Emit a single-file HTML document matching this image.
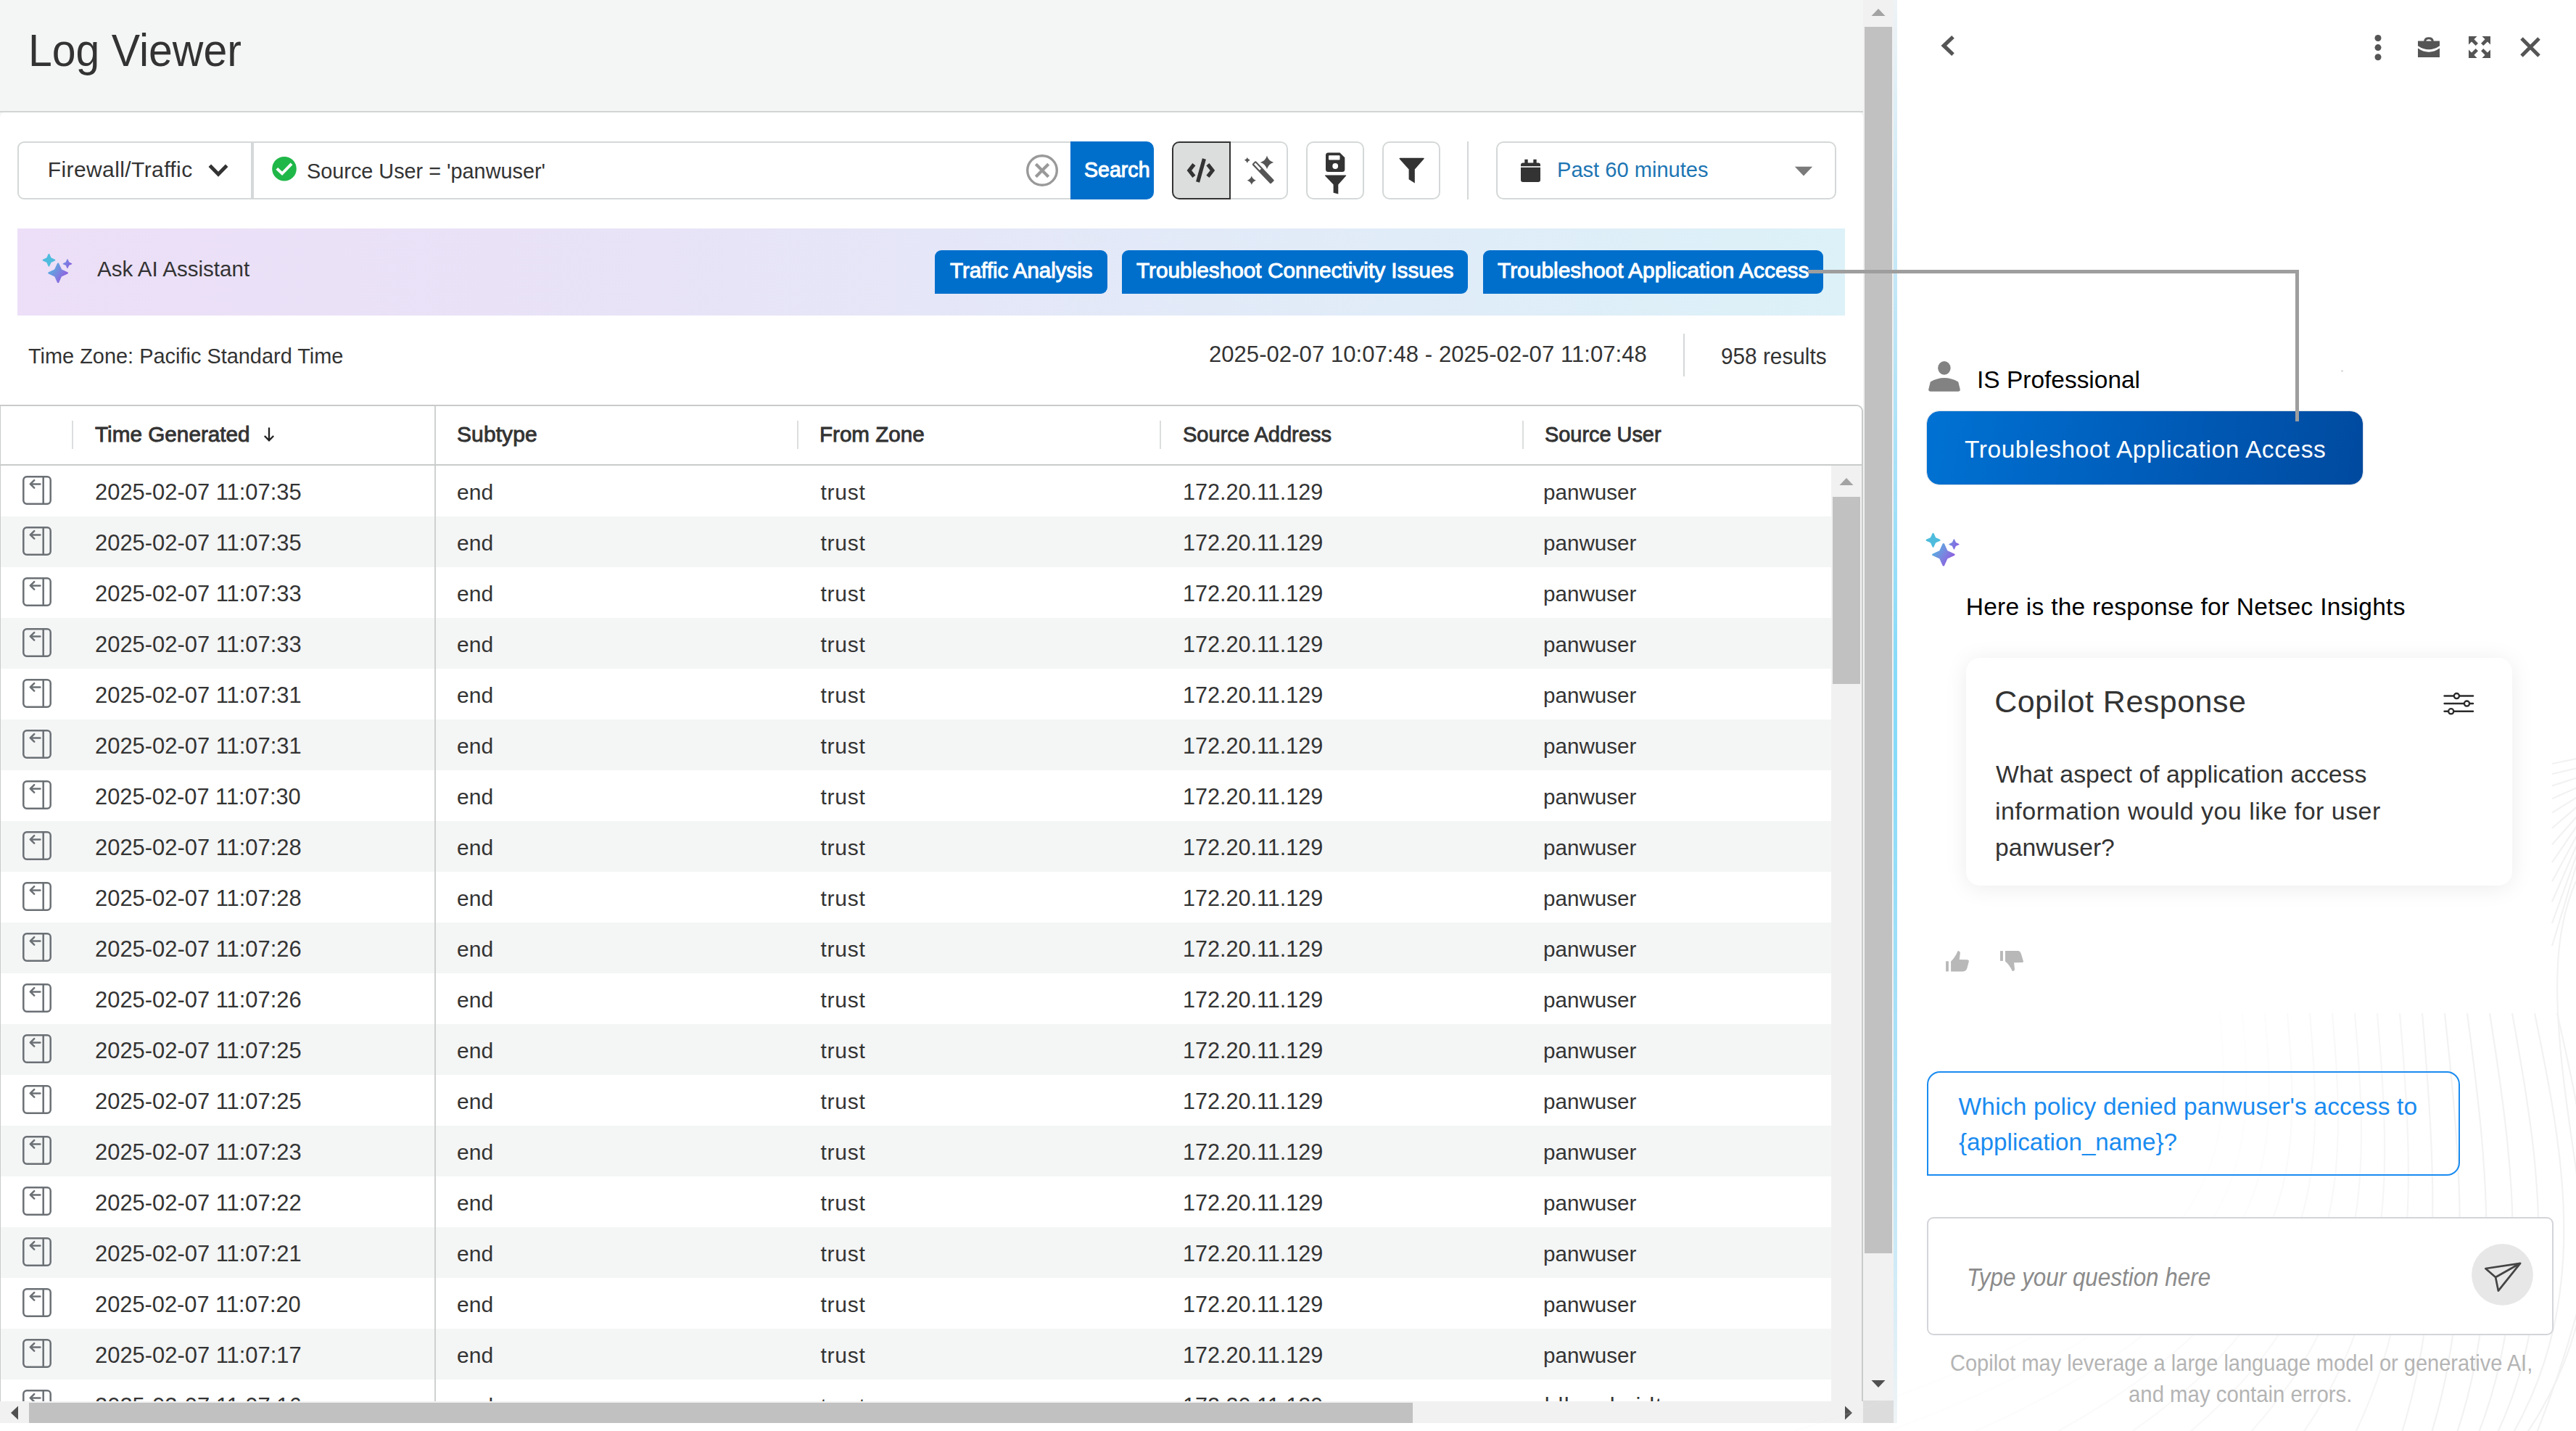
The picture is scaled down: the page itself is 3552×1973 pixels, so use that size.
<!DOCTYPE html>
<html><head><meta charset="utf-8"><title>Log Viewer</title>
<style>
html,body{margin:0;padding:0;}
body{width:3552px;height:1973px;position:relative;overflow:hidden;background:#fff;font-family:"Liberation Sans", sans-serif;}
body>div,body>span,body>svg{position:absolute;box-sizing:border-box;}
body>span{white-space:nowrap;line-height:1;display:block;transform-origin:0 0;}
svg{overflow:visible;}
</style></head><body>
<div style="left:0px;top:0px;width:2569px;height:166px;background:#f4f5f5;"></div>
<div style="left:0px;top:153px;width:2569px;height:2px;background:#d3d5d5;"></div>
<div style="left:0px;top:155px;width:2569px;height:1818px;background:#fff;border-radius:7px 7px 0 0;"></div>
<span style="left:39.08px;top:38.09px;font-size:62.5px;color:#333;transform:scaleX(0.9432);">Log Viewer</span>
<div style="left:24px;top:195px;width:324px;height:80px;border:2px solid #d5d8d8;border-radius:9px 0 0 9px;background:#fff;"></div>
<div style="left:348px;top:195px;width:1129px;height:80px;border:2px solid #d5d8d8;border-right:none;background:#fff;"></div>
<span style="left:65.70px;top:218.70px;font-size:30px;color:#333;letter-spacing:0.407px;">Firewall/Traffic</span>
<svg style="left:286px;top:224px;" width="30" height="22" viewBox="0 0 30 22"><path d="M3.3 4.3 L15 16.2 L26.7 4.3" fill="none" stroke="#333" stroke-width="5" stroke-linecap="butt" stroke-linejoin="miter"/></svg>
<svg style="left:375px;top:216px;" width="34" height="34" viewBox="0 0 34 34"><circle cx="17" cy="16.7" r="16.8" fill="#1fb748"/><path d="M6.8 16.4 L14 23.3 L27 9.8" fill="none" stroke="#fff" stroke-width="4"/></svg>
<span style="left:422.94px;top:221.10px;font-size:30px;color:#333;transform:scaleX(0.9608);">Source User = 'panwuser'</span>
<svg style="left:1414px;top:212px;" width="46" height="46" viewBox="0 0 46 46"><circle cx="23" cy="23" r="20.3" fill="none" stroke="#999" stroke-width="3.4"/><path d="M14.3 14.3 L31.7 31.7 M31.7 14.3 L14.3 31.7" stroke="#999" stroke-width="4.2" fill="none"/></svg>
<div style="left:1476px;top:195px;width:115px;height:80px;background:#006fcc;border-radius:0 10px 10px 0;"></div>
<span style="left:1495.45px;top:219.10px;font-size:30px;color:#fff;transform:scaleX(0.9526);-webkit-text-stroke:1.1px #fff;">Search</span>
<div style="left:1696px;top:195px;width:80px;height:80px;border:2px solid #d5d8d8;border-left:none;border-radius:0 10px 10px 0;background:#fff;"></div>
<div style="left:1616px;top:195px;width:81px;height:80px;border:2px solid #333;border-radius:10px 0 0 10px;background:#dcdddd;"></div>
<svg style="left:0;top:0" width="3552" height="1973" viewBox="0 0 3552 1973"><path d="M1646.4 226.6 L1639.9 235 L1646.4 243.4 M1665.4 226.6 L1671.9 235 L1665.4 243.4 M1660.4 219 L1651.6 251" fill="none" stroke="#333" stroke-width="5.2" stroke-linejoin="miter"/></svg>
<svg style="left:0;top:0" width="3552" height="1973" viewBox="0 0 3552 1973"><g transform="translate(1729.6 225) rotate(46.3)"><rect x="-1.2" y="-3.6" width="37.4" height="7.2" rx="1.4" fill="#555"/><rect x="0.8" y="-1.5" width="11.2" height="3" fill="#fff"/></g><path d="M1747 214.70000000000002 Q1749.1252 221.7748 1756.2 223.9 Q1749.1252 226.0252 1747 233.1 Q1744.8748 226.0252 1737.8 223.9 Q1744.8748 221.7748 1747 214.70000000000002 Z" fill="#555"/><path d="M1719.8 216.9 Q1720.7009 219.8991 1723.7 220.8 Q1720.7009 221.70090000000002 1719.8 224.70000000000002 Q1718.8990999999999 221.70090000000002 1715.8999999999999 220.8 Q1718.8990999999999 219.8991 1719.8 216.9 Z" fill="#555"/><path d="M1725.8 242.6 Q1727.2091 247.2909 1731.8999999999999 248.7 Q1727.2091 250.10909999999998 1725.8 254.79999999999998 Q1724.3908999999999 250.10909999999998 1719.7 248.7 Q1724.3908999999999 247.2909 1725.8 242.6 Z" fill="#555"/></svg>
<div style="left:1801px;top:195px;width:80px;height:80px;border:2px solid #d5d8d8;border-radius:10px;background:#fff;"></div>
<svg style="left:1826px;top:209px;" width="32" height="62" viewBox="0 0 32 62"><path d="M2 5 Q2 1.5 5.5 1.5 L21.5 1.5 L28.3 8.3 L28.3 24.5 Q28.3 28 24.8 28 L5.5 28 Q2 28 2 24.5 Z" fill="#333"/><rect x="6" y="5.2" width="15.5" height="6.3" rx="1" fill="#fff"/><circle cx="15.2" cy="20" r="3.9" fill="#fff"/><path d="M1.2 32.6 L29.8 32.6 Q30.6 32.6 30 33.4 L19.3 45.5 L19.3 58.6 L12.6 56.8 L12.6 45.5 L1.2 33.4 Q0.5 32.6 1.2 32.6 Z" fill="#333"/></svg>
<div style="left:1906px;top:195px;width:80px;height:80px;border:2px solid #d5d8d8;border-radius:10px;background:#fff;"></div>
<svg style="left:1928px;top:216px;" width="38" height="38" viewBox="0 0 38 38"><path d="M2.5 1.8 L34.8 1.8 Q36.6 1.8 35.4 3.3 L22.8 17.6 L22.8 36.4 L14.6 31.2 L14.6 17.6 L1.8 3.3 Q0.7 1.8 2.5 1.8 Z" fill="#333"/></svg>
<div style="left:2023px;top:195px;width:2px;height:80px;background:#d5d8d8;"></div>
<div style="left:2063px;top:195px;width:469px;height:80px;border:2px solid #d5d8d8;border-radius:10px;background:#fff;"></div>
<svg style="left:2096px;top:219px;" width="30" height="34" viewBox="0 0 30 34"><path d="M1 8.5 Q1 5.5 4 5.5 L25 5.5 Q28 5.5 28 8.5 L28 29 Q28 32 25 32 L4 32 Q1 32 1 29 Z" fill="#333"/><rect x="6.3" y="0.8" width="4.4" height="8" fill="#333"/><rect x="18.3" y="0.8" width="4.4" height="8" fill="#333"/><rect x="1" y="10.2" width="27" height="1.6" fill="#fff"/></svg>
<span style="left:2146.66px;top:219.20px;font-size:30px;color:#1d75b3;transform:scaleX(0.9696);">Past 60 minutes</span>
<svg style="left:2474px;top:229px;" width="26" height="14" viewBox="0 0 26 14"><path d="M0.8 0.8 L25.2 0.8 L13 13.4 Z" fill="#7a7a7a"/></svg>
<div style="left:24px;top:315px;width:2520px;height:120px;background:linear-gradient(90deg,#ecdff7 0%,#e8e3f7 35%,#e1ebf8 70%,#dcf1f8 100%);"></div>
<svg style="left:58.8px;top:349.8px;" width="40" height="40" viewBox="0 0 45.2 45.2"><defs><linearGradient id="g1" gradientUnits="userSpaceOnUse" x1="10" y1="22" x2="37" y2="40"><stop offset="0" stop-color="#55b0e0"/><stop offset="0.5" stop-color="#7a86df"/><stop offset="1" stop-color="#9355e2"/></linearGradient><linearGradient id="g1b" gradientUnits="userSpaceOnUse" x1="31" y1="12" x2="46" y2="19"><stop offset="0" stop-color="#7291e0"/><stop offset="1" stop-color="#8a5ce2"/></linearGradient></defs><path d="M9.54 0.77 L12.38 6.93 L18.54 9.77 L12.38 12.61 L9.54 18.77 L6.70 12.61 L0.54 9.77 L6.70 6.93 Z" fill="#4fbcdd" stroke="#4fbcdd" stroke-width="2.0" stroke-linejoin="round"/><path d="M38.40 8.85 L40.48 13.37 L45.00 15.45 L40.48 17.53 L38.40 22.05 L36.32 17.53 L31.80 15.45 L36.32 13.37 Z" fill="url(#g1b)" stroke="url(#g1b)" stroke-width="1.2" stroke-linejoin="round"/><path d="M23.85 15.46 L28.35 25.26 L38.15 29.76 L28.35 34.26 L23.85 44.06 L19.35 34.26 L9.55 29.76 L19.35 25.26 Z" fill="url(#g1)" stroke="url(#g1)" stroke-width="2.8" stroke-linejoin="round"/></svg>
<span style="left:134.00px;top:356.41px;font-size:30px;color:#333;transform:scaleX(0.9845);">Ask AI Assistant</span>
<div style="left:1289px;top:345px;width:237.6px;height:59.5px;background:#006fcc;border-radius:9px 9px 9px 0;"></div>
<span style="left:1309.80px;top:358.00px;font-size:30px;color:#fff;transform:scaleX(0.9825);-webkit-text-stroke:1.0px #fff;">Traffic Analysis</span>
<div style="left:1546.7px;top:345px;width:477.8px;height:59.5px;background:#006fcc;border-radius:9px 9px 9px 0;"></div>
<span style="left:1567.40px;top:358.00px;font-size:30px;color:#fff;transform:scaleX(0.9922);-webkit-text-stroke:1.0px #fff;">Troubleshoot Connectivity Issues</span>
<div style="left:2045px;top:345px;width:468.6px;height:59.5px;background:#006fcc;border-radius:9px 9px 9px 0;"></div>
<span style="left:2065.00px;top:358.00px;font-size:30px;color:#fff;transform:scaleX(0.9969);-webkit-text-stroke:1.0px #fff;">Troubleshoot Application Access</span>
<span style="left:39.40px;top:476.00px;font-size:30px;color:#333;transform:scaleX(0.9638);">Time Zone: Pacific Standard Time</span>
<span style="left:1666.90px;top:472.76px;font-size:31px;color:#333;letter-spacing:0.074px;">2025-02-07 10:07:48 - 2025-02-07 11:07:48</span>
<div style="left:2321px;top:460px;width:2px;height:59px;background:#d5d8d8;"></div>
<span style="left:2373.42px;top:476.18px;font-size:30.5px;color:#333;transform:scaleX(0.9759);">958 results</span>
<div style="left:0px;top:558px;width:2569px;height:1375px;border:2px solid #c9cbcb;border-bottom:none;border-left-width:1px;border-radius:0 9px 0 0;background:#fff;"></div>
<div style="left:1px;top:641px;width:2566px;height:1291px;overflow:hidden;">
<svg style="position:absolute;left:30px;top:15.2px" width="40" height="40" viewBox="0 0 40 40"><rect x="1.3" y="1.3" width="37.4" height="37.4" rx="4.6" fill="none" stroke="#6b7075" stroke-width="2.5"/><path d="M28.7 1.5 V38.5 M24.4 11.4 H11.2 M16.2 6.1 L10.8 11.4 L16.2 16.7" fill="none" stroke="#6b7075" stroke-width="2.5" stroke-linecap="round" stroke-linejoin="round"/></svg>
<div style="position:absolute;left:0;top:70.6px;width:2524px;height:70.0px;background:#f4f5f5;"></div>
<svg style="position:absolute;left:30px;top:85.2px" width="40" height="40" viewBox="0 0 40 40"><rect x="1.3" y="1.3" width="37.4" height="37.4" rx="4.6" fill="none" stroke="#6b7075" stroke-width="2.5"/><path d="M28.7 1.5 V38.5 M24.4 11.4 H11.2 M16.2 6.1 L10.8 11.4 L16.2 16.7" fill="none" stroke="#6b7075" stroke-width="2.5" stroke-linecap="round" stroke-linejoin="round"/></svg>
<svg style="position:absolute;left:30px;top:155.2px" width="40" height="40" viewBox="0 0 40 40"><rect x="1.3" y="1.3" width="37.4" height="37.4" rx="4.6" fill="none" stroke="#6b7075" stroke-width="2.5"/><path d="M28.7 1.5 V38.5 M24.4 11.4 H11.2 M16.2 6.1 L10.8 11.4 L16.2 16.7" fill="none" stroke="#6b7075" stroke-width="2.5" stroke-linecap="round" stroke-linejoin="round"/></svg>
<div style="position:absolute;left:0;top:210.6px;width:2524px;height:70.0px;background:#f4f5f5;"></div>
<svg style="position:absolute;left:30px;top:225.2px" width="40" height="40" viewBox="0 0 40 40"><rect x="1.3" y="1.3" width="37.4" height="37.4" rx="4.6" fill="none" stroke="#6b7075" stroke-width="2.5"/><path d="M28.7 1.5 V38.5 M24.4 11.4 H11.2 M16.2 6.1 L10.8 11.4 L16.2 16.7" fill="none" stroke="#6b7075" stroke-width="2.5" stroke-linecap="round" stroke-linejoin="round"/></svg>
<svg style="position:absolute;left:30px;top:295.2px" width="40" height="40" viewBox="0 0 40 40"><rect x="1.3" y="1.3" width="37.4" height="37.4" rx="4.6" fill="none" stroke="#6b7075" stroke-width="2.5"/><path d="M28.7 1.5 V38.5 M24.4 11.4 H11.2 M16.2 6.1 L10.8 11.4 L16.2 16.7" fill="none" stroke="#6b7075" stroke-width="2.5" stroke-linecap="round" stroke-linejoin="round"/></svg>
<div style="position:absolute;left:0;top:350.6px;width:2524px;height:70.0px;background:#f4f5f5;"></div>
<svg style="position:absolute;left:30px;top:365.2px" width="40" height="40" viewBox="0 0 40 40"><rect x="1.3" y="1.3" width="37.4" height="37.4" rx="4.6" fill="none" stroke="#6b7075" stroke-width="2.5"/><path d="M28.7 1.5 V38.5 M24.4 11.4 H11.2 M16.2 6.1 L10.8 11.4 L16.2 16.7" fill="none" stroke="#6b7075" stroke-width="2.5" stroke-linecap="round" stroke-linejoin="round"/></svg>
<svg style="position:absolute;left:30px;top:435.2px" width="40" height="40" viewBox="0 0 40 40"><rect x="1.3" y="1.3" width="37.4" height="37.4" rx="4.6" fill="none" stroke="#6b7075" stroke-width="2.5"/><path d="M28.7 1.5 V38.5 M24.4 11.4 H11.2 M16.2 6.1 L10.8 11.4 L16.2 16.7" fill="none" stroke="#6b7075" stroke-width="2.5" stroke-linecap="round" stroke-linejoin="round"/></svg>
<div style="position:absolute;left:0;top:490.6px;width:2524px;height:70.0px;background:#f4f5f5;"></div>
<svg style="position:absolute;left:30px;top:505.2px" width="40" height="40" viewBox="0 0 40 40"><rect x="1.3" y="1.3" width="37.4" height="37.4" rx="4.6" fill="none" stroke="#6b7075" stroke-width="2.5"/><path d="M28.7 1.5 V38.5 M24.4 11.4 H11.2 M16.2 6.1 L10.8 11.4 L16.2 16.7" fill="none" stroke="#6b7075" stroke-width="2.5" stroke-linecap="round" stroke-linejoin="round"/></svg>
<svg style="position:absolute;left:30px;top:575.2px" width="40" height="40" viewBox="0 0 40 40"><rect x="1.3" y="1.3" width="37.4" height="37.4" rx="4.6" fill="none" stroke="#6b7075" stroke-width="2.5"/><path d="M28.7 1.5 V38.5 M24.4 11.4 H11.2 M16.2 6.1 L10.8 11.4 L16.2 16.7" fill="none" stroke="#6b7075" stroke-width="2.5" stroke-linecap="round" stroke-linejoin="round"/></svg>
<div style="position:absolute;left:0;top:630.6px;width:2524px;height:70.0px;background:#f4f5f5;"></div>
<svg style="position:absolute;left:30px;top:645.2px" width="40" height="40" viewBox="0 0 40 40"><rect x="1.3" y="1.3" width="37.4" height="37.4" rx="4.6" fill="none" stroke="#6b7075" stroke-width="2.5"/><path d="M28.7 1.5 V38.5 M24.4 11.4 H11.2 M16.2 6.1 L10.8 11.4 L16.2 16.7" fill="none" stroke="#6b7075" stroke-width="2.5" stroke-linecap="round" stroke-linejoin="round"/></svg>
<svg style="position:absolute;left:30px;top:715.2px" width="40" height="40" viewBox="0 0 40 40"><rect x="1.3" y="1.3" width="37.4" height="37.4" rx="4.6" fill="none" stroke="#6b7075" stroke-width="2.5"/><path d="M28.7 1.5 V38.5 M24.4 11.4 H11.2 M16.2 6.1 L10.8 11.4 L16.2 16.7" fill="none" stroke="#6b7075" stroke-width="2.5" stroke-linecap="round" stroke-linejoin="round"/></svg>
<div style="position:absolute;left:0;top:770.6px;width:2524px;height:70.0px;background:#f4f5f5;"></div>
<svg style="position:absolute;left:30px;top:785.2px" width="40" height="40" viewBox="0 0 40 40"><rect x="1.3" y="1.3" width="37.4" height="37.4" rx="4.6" fill="none" stroke="#6b7075" stroke-width="2.5"/><path d="M28.7 1.5 V38.5 M24.4 11.4 H11.2 M16.2 6.1 L10.8 11.4 L16.2 16.7" fill="none" stroke="#6b7075" stroke-width="2.5" stroke-linecap="round" stroke-linejoin="round"/></svg>
<svg style="position:absolute;left:30px;top:855.2px" width="40" height="40" viewBox="0 0 40 40"><rect x="1.3" y="1.3" width="37.4" height="37.4" rx="4.6" fill="none" stroke="#6b7075" stroke-width="2.5"/><path d="M28.7 1.5 V38.5 M24.4 11.4 H11.2 M16.2 6.1 L10.8 11.4 L16.2 16.7" fill="none" stroke="#6b7075" stroke-width="2.5" stroke-linecap="round" stroke-linejoin="round"/></svg>
<div style="position:absolute;left:0;top:910.6px;width:2524px;height:70.0px;background:#f4f5f5;"></div>
<svg style="position:absolute;left:30px;top:925.2px" width="40" height="40" viewBox="0 0 40 40"><rect x="1.3" y="1.3" width="37.4" height="37.4" rx="4.6" fill="none" stroke="#6b7075" stroke-width="2.5"/><path d="M28.7 1.5 V38.5 M24.4 11.4 H11.2 M16.2 6.1 L10.8 11.4 L16.2 16.7" fill="none" stroke="#6b7075" stroke-width="2.5" stroke-linecap="round" stroke-linejoin="round"/></svg>
<svg style="position:absolute;left:30px;top:995.2px" width="40" height="40" viewBox="0 0 40 40"><rect x="1.3" y="1.3" width="37.4" height="37.4" rx="4.6" fill="none" stroke="#6b7075" stroke-width="2.5"/><path d="M28.7 1.5 V38.5 M24.4 11.4 H11.2 M16.2 6.1 L10.8 11.4 L16.2 16.7" fill="none" stroke="#6b7075" stroke-width="2.5" stroke-linecap="round" stroke-linejoin="round"/></svg>
<div style="position:absolute;left:0;top:1050.6px;width:2524px;height:70.0px;background:#f4f5f5;"></div>
<svg style="position:absolute;left:30px;top:1065.2px" width="40" height="40" viewBox="0 0 40 40"><rect x="1.3" y="1.3" width="37.4" height="37.4" rx="4.6" fill="none" stroke="#6b7075" stroke-width="2.5"/><path d="M28.7 1.5 V38.5 M24.4 11.4 H11.2 M16.2 6.1 L10.8 11.4 L16.2 16.7" fill="none" stroke="#6b7075" stroke-width="2.5" stroke-linecap="round" stroke-linejoin="round"/></svg>
<svg style="position:absolute;left:30px;top:1135.2px" width="40" height="40" viewBox="0 0 40 40"><rect x="1.3" y="1.3" width="37.4" height="37.4" rx="4.6" fill="none" stroke="#6b7075" stroke-width="2.5"/><path d="M28.7 1.5 V38.5 M24.4 11.4 H11.2 M16.2 6.1 L10.8 11.4 L16.2 16.7" fill="none" stroke="#6b7075" stroke-width="2.5" stroke-linecap="round" stroke-linejoin="round"/></svg>
<div style="position:absolute;left:0;top:1190.6px;width:2524px;height:70.0px;background:#f4f5f5;"></div>
<svg style="position:absolute;left:30px;top:1205.2px" width="40" height="40" viewBox="0 0 40 40"><rect x="1.3" y="1.3" width="37.4" height="37.4" rx="4.6" fill="none" stroke="#6b7075" stroke-width="2.5"/><path d="M28.7 1.5 V38.5 M24.4 11.4 H11.2 M16.2 6.1 L10.8 11.4 L16.2 16.7" fill="none" stroke="#6b7075" stroke-width="2.5" stroke-linecap="round" stroke-linejoin="round"/></svg>
<svg style="position:absolute;left:30px;top:1275.2px" width="40" height="40" viewBox="0 0 40 40"><rect x="1.3" y="1.3" width="37.4" height="37.4" rx="4.6" fill="none" stroke="#6b7075" stroke-width="2.5"/><path d="M28.7 1.5 V38.5 M24.4 11.4 H11.2 M16.2 6.1 L10.8 11.4 L16.2 16.7" fill="none" stroke="#6b7075" stroke-width="2.5" stroke-linecap="round" stroke-linejoin="round"/></svg>
</div>
<span style="left:130.60px;top:662.76px;font-size:31px;color:#333;transform:scaleX(0.9970);">2025-02-07 11:07:35</span>
<span style="left:630.00px;top:663.61px;font-size:30px;color:#333;letter-spacing:0.061px;">end</span>
<span style="left:1131.50px;top:663.61px;font-size:30px;color:#333;letter-spacing:0.744px;">trust</span>
<span style="left:1630.83px;top:662.76px;font-size:31px;color:#333;transform:scaleX(0.9858);">172.20.11.129</span>
<span style="left:2128.01px;top:663.61px;font-size:30px;color:#333;transform:scaleX(0.9876);">panwuser</span>
<span style="left:130.60px;top:732.76px;font-size:31px;color:#333;transform:scaleX(0.9970);">2025-02-07 11:07:35</span>
<span style="left:630.00px;top:733.61px;font-size:30px;color:#333;letter-spacing:0.061px;">end</span>
<span style="left:1131.50px;top:733.61px;font-size:30px;color:#333;letter-spacing:0.744px;">trust</span>
<span style="left:1630.83px;top:732.76px;font-size:31px;color:#333;transform:scaleX(0.9858);">172.20.11.129</span>
<span style="left:2128.01px;top:733.61px;font-size:30px;color:#333;transform:scaleX(0.9876);">panwuser</span>
<span style="left:130.60px;top:802.76px;font-size:31px;color:#333;transform:scaleX(0.9970);">2025-02-07 11:07:33</span>
<span style="left:630.00px;top:803.61px;font-size:30px;color:#333;letter-spacing:0.061px;">end</span>
<span style="left:1131.50px;top:803.61px;font-size:30px;color:#333;letter-spacing:0.744px;">trust</span>
<span style="left:1630.83px;top:802.76px;font-size:31px;color:#333;transform:scaleX(0.9858);">172.20.11.129</span>
<span style="left:2128.01px;top:803.61px;font-size:30px;color:#333;transform:scaleX(0.9876);">panwuser</span>
<span style="left:130.60px;top:872.76px;font-size:31px;color:#333;transform:scaleX(0.9970);">2025-02-07 11:07:33</span>
<span style="left:630.00px;top:873.61px;font-size:30px;color:#333;letter-spacing:0.061px;">end</span>
<span style="left:1131.50px;top:873.61px;font-size:30px;color:#333;letter-spacing:0.744px;">trust</span>
<span style="left:1630.83px;top:872.76px;font-size:31px;color:#333;transform:scaleX(0.9858);">172.20.11.129</span>
<span style="left:2128.01px;top:873.61px;font-size:30px;color:#333;transform:scaleX(0.9876);">panwuser</span>
<span style="left:130.60px;top:942.76px;font-size:31px;color:#333;transform:scaleX(0.9970);">2025-02-07 11:07:31</span>
<span style="left:630.00px;top:943.61px;font-size:30px;color:#333;letter-spacing:0.061px;">end</span>
<span style="left:1131.50px;top:943.61px;font-size:30px;color:#333;letter-spacing:0.744px;">trust</span>
<span style="left:1630.83px;top:942.76px;font-size:31px;color:#333;transform:scaleX(0.9858);">172.20.11.129</span>
<span style="left:2128.01px;top:943.61px;font-size:30px;color:#333;transform:scaleX(0.9876);">panwuser</span>
<span style="left:130.60px;top:1012.76px;font-size:31px;color:#333;transform:scaleX(0.9970);">2025-02-07 11:07:31</span>
<span style="left:630.00px;top:1013.61px;font-size:30px;color:#333;letter-spacing:0.061px;">end</span>
<span style="left:1131.50px;top:1013.61px;font-size:30px;color:#333;letter-spacing:0.744px;">trust</span>
<span style="left:1630.83px;top:1012.76px;font-size:31px;color:#333;transform:scaleX(0.9858);">172.20.11.129</span>
<span style="left:2128.01px;top:1013.61px;font-size:30px;color:#333;transform:scaleX(0.9876);">panwuser</span>
<span style="left:130.61px;top:1082.76px;font-size:31px;color:#333;transform:scaleX(0.9935);">2025-02-07 11:07:30</span>
<span style="left:630.00px;top:1083.61px;font-size:30px;color:#333;letter-spacing:0.061px;">end</span>
<span style="left:1131.50px;top:1083.61px;font-size:30px;color:#333;letter-spacing:0.744px;">trust</span>
<span style="left:1630.83px;top:1082.76px;font-size:31px;color:#333;transform:scaleX(0.9858);">172.20.11.129</span>
<span style="left:2128.01px;top:1083.61px;font-size:30px;color:#333;transform:scaleX(0.9876);">panwuser</span>
<span style="left:130.60px;top:1152.76px;font-size:31px;color:#333;transform:scaleX(0.9970);">2025-02-07 11:07:28</span>
<span style="left:630.00px;top:1153.61px;font-size:30px;color:#333;letter-spacing:0.061px;">end</span>
<span style="left:1131.50px;top:1153.61px;font-size:30px;color:#333;letter-spacing:0.744px;">trust</span>
<span style="left:1630.83px;top:1152.76px;font-size:31px;color:#333;transform:scaleX(0.9858);">172.20.11.129</span>
<span style="left:2128.01px;top:1153.61px;font-size:30px;color:#333;transform:scaleX(0.9876);">panwuser</span>
<span style="left:130.60px;top:1222.76px;font-size:31px;color:#333;transform:scaleX(0.9970);">2025-02-07 11:07:28</span>
<span style="left:630.00px;top:1223.61px;font-size:30px;color:#333;letter-spacing:0.061px;">end</span>
<span style="left:1131.50px;top:1223.61px;font-size:30px;color:#333;letter-spacing:0.744px;">trust</span>
<span style="left:1630.83px;top:1222.76px;font-size:31px;color:#333;transform:scaleX(0.9858);">172.20.11.129</span>
<span style="left:2128.01px;top:1223.61px;font-size:30px;color:#333;transform:scaleX(0.9876);">panwuser</span>
<span style="left:130.60px;top:1292.76px;font-size:31px;color:#333;transform:scaleX(0.9970);">2025-02-07 11:07:26</span>
<span style="left:630.00px;top:1293.61px;font-size:30px;color:#333;letter-spacing:0.061px;">end</span>
<span style="left:1131.50px;top:1293.61px;font-size:30px;color:#333;letter-spacing:0.744px;">trust</span>
<span style="left:1630.83px;top:1292.76px;font-size:31px;color:#333;transform:scaleX(0.9858);">172.20.11.129</span>
<span style="left:2128.01px;top:1293.61px;font-size:30px;color:#333;transform:scaleX(0.9876);">panwuser</span>
<span style="left:130.60px;top:1362.76px;font-size:31px;color:#333;transform:scaleX(0.9970);">2025-02-07 11:07:26</span>
<span style="left:630.00px;top:1363.61px;font-size:30px;color:#333;letter-spacing:0.061px;">end</span>
<span style="left:1131.50px;top:1363.61px;font-size:30px;color:#333;letter-spacing:0.744px;">trust</span>
<span style="left:1630.83px;top:1362.76px;font-size:31px;color:#333;transform:scaleX(0.9858);">172.20.11.129</span>
<span style="left:2128.01px;top:1363.61px;font-size:30px;color:#333;transform:scaleX(0.9876);">panwuser</span>
<span style="left:130.60px;top:1432.76px;font-size:31px;color:#333;transform:scaleX(0.9970);">2025-02-07 11:07:25</span>
<span style="left:630.00px;top:1433.61px;font-size:30px;color:#333;letter-spacing:0.061px;">end</span>
<span style="left:1131.50px;top:1433.61px;font-size:30px;color:#333;letter-spacing:0.744px;">trust</span>
<span style="left:1630.83px;top:1432.76px;font-size:31px;color:#333;transform:scaleX(0.9858);">172.20.11.129</span>
<span style="left:2128.01px;top:1433.61px;font-size:30px;color:#333;transform:scaleX(0.9876);">panwuser</span>
<span style="left:130.60px;top:1502.76px;font-size:31px;color:#333;transform:scaleX(0.9970);">2025-02-07 11:07:25</span>
<span style="left:630.00px;top:1503.61px;font-size:30px;color:#333;letter-spacing:0.061px;">end</span>
<span style="left:1131.50px;top:1503.61px;font-size:30px;color:#333;letter-spacing:0.744px;">trust</span>
<span style="left:1630.83px;top:1502.76px;font-size:31px;color:#333;transform:scaleX(0.9858);">172.20.11.129</span>
<span style="left:2128.01px;top:1503.61px;font-size:30px;color:#333;transform:scaleX(0.9876);">panwuser</span>
<span style="left:130.60px;top:1572.76px;font-size:31px;color:#333;transform:scaleX(0.9970);">2025-02-07 11:07:23</span>
<span style="left:630.00px;top:1573.61px;font-size:30px;color:#333;letter-spacing:0.061px;">end</span>
<span style="left:1131.50px;top:1573.61px;font-size:30px;color:#333;letter-spacing:0.744px;">trust</span>
<span style="left:1630.83px;top:1572.76px;font-size:31px;color:#333;transform:scaleX(0.9858);">172.20.11.129</span>
<span style="left:2128.01px;top:1573.61px;font-size:30px;color:#333;transform:scaleX(0.9876);">panwuser</span>
<span style="left:130.60px;top:1642.76px;font-size:31px;color:#333;transform:scaleX(0.9970);">2025-02-07 11:07:22</span>
<span style="left:630.00px;top:1643.61px;font-size:30px;color:#333;letter-spacing:0.061px;">end</span>
<span style="left:1131.50px;top:1643.61px;font-size:30px;color:#333;letter-spacing:0.744px;">trust</span>
<span style="left:1630.83px;top:1642.76px;font-size:31px;color:#333;transform:scaleX(0.9858);">172.20.11.129</span>
<span style="left:2128.01px;top:1643.61px;font-size:30px;color:#333;transform:scaleX(0.9876);">panwuser</span>
<span style="left:130.60px;top:1712.76px;font-size:31px;color:#333;transform:scaleX(0.9970);">2025-02-07 11:07:21</span>
<span style="left:630.00px;top:1713.61px;font-size:30px;color:#333;letter-spacing:0.061px;">end</span>
<span style="left:1131.50px;top:1713.61px;font-size:30px;color:#333;letter-spacing:0.744px;">trust</span>
<span style="left:1630.83px;top:1712.76px;font-size:31px;color:#333;transform:scaleX(0.9858);">172.20.11.129</span>
<span style="left:2128.01px;top:1713.61px;font-size:30px;color:#333;transform:scaleX(0.9876);">panwuser</span>
<span style="left:130.61px;top:1782.76px;font-size:31px;color:#333;transform:scaleX(0.9935);">2025-02-07 11:07:20</span>
<span style="left:630.00px;top:1783.61px;font-size:30px;color:#333;letter-spacing:0.061px;">end</span>
<span style="left:1131.50px;top:1783.61px;font-size:30px;color:#333;letter-spacing:0.744px;">trust</span>
<span style="left:1630.83px;top:1782.76px;font-size:31px;color:#333;transform:scaleX(0.9858);">172.20.11.129</span>
<span style="left:2128.01px;top:1783.61px;font-size:30px;color:#333;transform:scaleX(0.9876);">panwuser</span>
<span style="left:130.60px;top:1852.76px;font-size:31px;color:#333;transform:scaleX(0.9970);">2025-02-07 11:07:17</span>
<span style="left:630.00px;top:1853.61px;font-size:30px;color:#333;letter-spacing:0.061px;">end</span>
<span style="left:1131.50px;top:1853.61px;font-size:30px;color:#333;letter-spacing:0.744px;">trust</span>
<span style="left:1630.83px;top:1852.76px;font-size:31px;color:#333;transform:scaleX(0.9858);">172.20.11.129</span>
<span style="left:2128.01px;top:1853.61px;font-size:30px;color:#333;transform:scaleX(0.9876);">panwuser</span>
<span style="left:130.60px;top:1922.76px;font-size:31px;color:#333;transform:scaleX(0.9970);">2025-02-07 11:07:16</span>
<span style="left:630.00px;top:1923.61px;font-size:30px;color:#333;letter-spacing:0.061px;">end</span>
<span style="left:1131.50px;top:1923.61px;font-size:30px;color:#333;letter-spacing:0.744px;">trust</span>
<span style="left:1630.83px;top:1922.76px;font-size:31px;color:#333;transform:scaleX(0.9858);">172.20.11.129</span>
<span style="left:2129.70px;top:1922.76px;font-size:31px;color:#333;letter-spacing:1.511px;">bllovekaidt</span>
<div style="left:599px;top:560px;width:2px;height:1372px;background:#cfd1d1;"></div>
<div style="left:1px;top:560px;width:2566px;height:80px;background:#fff;border-radius:0 8px 0 0;"></div>
<div style="left:599px;top:560px;width:2px;height:80px;background:#cfd1d1;"></div>
<div style="left:0px;top:639.7px;width:2569px;height:2px;background:#c9cbcb;"></div>
<div style="left:99px;top:580px;width:2px;height:39px;background:#dcdede;"></div>
<div style="left:1099px;top:580px;width:2px;height:39px;background:#dcdede;"></div>
<div style="left:1599px;top:580px;width:2px;height:39px;background:#dcdede;"></div>
<div style="left:2099px;top:580px;width:2px;height:39px;background:#dcdede;"></div>
<span style="left:131.25px;top:583.61px;font-size:30px;color:#333;transform:scaleX(0.9907);-webkit-text-stroke:0.9px #333;">Time Generated</span>
<svg style="left:363px;top:588px;" width="16" height="22" viewBox="0 0 16 22"><path d="M8 1.5 V19 M1.8 13 L8 19.4 L14.2 13" fill="none" stroke="#222" stroke-width="2.3"/></svg>
<span style="left:630.00px;top:583.61px;font-size:30px;color:#333;letter-spacing:0.098px;-webkit-text-stroke:0.9px #333;">Subtype</span>
<span style="left:1130.03px;top:583.61px;font-size:30px;color:#333;transform:scaleX(0.9859);-webkit-text-stroke:0.9px #333;">From Zone</span>
<span style="left:1630.83px;top:583.61px;font-size:30px;color:#333;transform:scaleX(0.9675);-webkit-text-stroke:0.9px #333;">Source Address</span>
<span style="left:2130.04px;top:583.61px;font-size:30px;color:#333;transform:scaleX(0.9628);-webkit-text-stroke:0.9px #333;">Source User</span>
<div style="left:2525px;top:641.6px;width:42px;height:1291px;background:#f1f1f1;"></div>
<div style="left:2527.2px;top:684.6px;width:37.7px;height:258.2px;background:#c1c1c1;"></div>
<svg style="left:2536px;top:658px;" width="20" height="12" viewBox="0 0 20 12"><path d="M0.5 11 L10 1 L19.5 11 Z" fill="#a3a3a3"/></svg>
<div style="left:0px;top:1932px;width:2569px;height:30px;background:#f1f1f1;"></div>
<div style="left:40px;top:1933.5px;width:1908px;height:28.5px;background:#c1c1c1;"></div>
<svg style="left:14px;top:1938px;" width="12" height="20" viewBox="0 0 12 20"><path d="M11 0.5 L1 10 L11 19.5 Z" fill="#505050"/></svg>
<svg style="left:2543px;top:1938px;" width="12" height="20" viewBox="0 0 12 20"><path d="M1 0.5 L11 10 L1 19.5 Z" fill="#505050"/></svg>
<div style="left:0px;top:1962px;width:2616px;height:11px;background:#fff;"></div>
<div style="left:2569px;top:0px;width:42px;height:1932px;background:#f1f1f1;"></div>
<div style="left:2571px;top:37px;width:37.5px;height:1691px;background:#c1c1c1;"></div>
<svg style="left:2580px;top:11px;" width="20" height="12" viewBox="0 0 20 12"><path d="M0.5 11 L10 1 L19.5 11 Z" fill="#a3a3a3"/></svg>
<svg style="left:2580px;top:1902px;" width="20" height="12" viewBox="0 0 20 12"><path d="M0.5 1 L10 11 L19.5 1 Z" fill="#505050"/></svg>
<div style="left:2569px;top:1931px;width:42px;height:31px;background:#dcdcdc;"></div>
<div style="left:2611px;top:0px;width:5.2px;height:1962px;background:linear-gradient(180deg,#eef3f6 0%,#c3e7f7 20%,#87dbf9 47%,#87dbf9 53%,#b5e3f7 80%,#f0f4f6 100%);"></div>
<div style="left:2616px;top:0px;width:936px;height:1973px;background:#fff;"></div>
<svg style="left:0;top:0" width="3552" height="1973" viewBox="0 0 3552 1973"><g fill="none" stroke="#f2f2f2" stroke-width="2.2" stroke-linejoin="round"><path d="M3061.0 1397.0 L3062.9 1421.1 L3064.5 1445.2 L3065.6 1469.2 L3065.9 1493.3 L3065.0 1517.4 L3062.8 1541.5 L3058.8 1565.6 L3053.0 1589.7 L3044.9 1613.8 L3034.3 1637.8 L3020.9 1661.9 L3004.5 1686.0 L2984.7 1710.1 L2961.4 1734.2 L2934.1 1758.2 L2902.7 1782.3 L2866.8 1806.4 L2826.2 1830.5 L2780.7 1854.6 L2729.8 1878.7 L2673.4 1902.8 L2611.1 1926.8 L2542.8 1950.9 L2468.0 1975.0" stroke-opacity="0.12"/><path d="M3092.0 1397.0 L3093.9 1421.1 L3095.6 1445.2 L3096.8 1469.2 L3097.3 1493.3 L3096.9 1517.4 L3095.3 1541.5 L3092.3 1565.6 L3087.7 1589.7 L3081.1 1613.8 L3072.5 1637.8 L3061.5 1661.9 L3048.0 1686.0 L3031.6 1710.1 L3012.2 1734.2 L2989.5 1758.2 L2963.3 1782.3 L2933.4 1806.4 L2899.4 1830.5 L2861.3 1854.6 L2818.7 1878.7 L2771.4 1902.8 L2719.1 1926.8 L2661.8 1950.9 L2599.0 1975.0" stroke-opacity="0.17"/><path d="M3123.0 1397.0 L3124.9 1421.1 L3126.7 1445.2 L3128.0 1469.2 L3128.8 1493.3 L3128.7 1517.4 L3127.7 1541.5 L3125.5 1565.6 L3122.0 1589.7 L3116.9 1613.8 L3110.0 1637.8 L3101.2 1661.9 L3090.2 1686.0 L3076.9 1710.1 L3061.1 1734.2 L3042.5 1758.2 L3021.0 1782.3 L2996.4 1806.4 L2968.4 1830.5 L2936.9 1854.6 L2901.8 1878.7 L2862.7 1902.8 L2819.5 1926.8 L2772.0 1950.9 L2720.0 1975.0" stroke-opacity="0.26"/><path d="M3154.0 1397.0 L3155.9 1421.1 L3157.7 1445.2 L3159.2 1469.2 L3160.1 1493.3 L3160.5 1517.4 L3160.0 1541.5 L3158.6 1565.6 L3156.1 1589.7 L3152.3 1613.8 L3147.1 1637.8 L3140.3 1661.9 L3131.8 1686.0 L3121.3 1710.1 L3108.8 1734.2 L3094.0 1758.2 L3076.9 1782.3 L3057.2 1806.4 L3034.8 1830.5 L3009.6 1854.6 L2981.4 1878.7 L2949.9 1902.8 L2915.2 1926.8 L2876.9 1950.9 L2835.0 1975.0" stroke-opacity="0.35"/><path d="M3185.0 1397.0 L3186.9 1421.1 L3188.7 1445.2 L3190.3 1469.2 L3191.5 1493.3 L3192.1 1517.4 L3192.2 1541.5 L3191.4 1565.6 L3189.8 1589.7 L3187.1 1613.8 L3183.3 1637.8 L3178.2 1661.9 L3171.8 1686.0 L3163.7 1710.1 L3154.1 1734.2 L3142.6 1758.2 L3129.2 1782.3 L3113.8 1806.4 L3096.2 1830.5 L3076.3 1854.6 L3054.0 1878.7 L3029.2 1902.8 L3001.6 1926.8 L2971.3 1950.9 L2938.0 1975.0" stroke-opacity="0.44"/><path d="M3216.0 1397.0 L3217.9 1421.1 L3219.8 1445.2 L3221.4 1469.2 L3222.7 1493.3 L3223.6 1517.4 L3223.9 1541.5 L3223.7 1565.6 L3222.6 1589.7 L3220.8 1613.8 L3217.9 1637.8 L3214.0 1661.9 L3209.0 1686.0 L3202.7 1710.1 L3195.0 1734.2 L3185.8 1758.2 L3175.0 1782.3 L3162.6 1806.4 L3148.3 1830.5 L3132.1 1854.6 L3114.0 1878.7 L3093.7 1902.8 L3071.1 1926.8 L3046.3 1950.9 L3019.0 1975.0" stroke-opacity="0.53"/><path d="M3247.0 1397.0 L3248.9 1421.1 L3250.8 1445.2 L3252.5 1469.2 L3253.9 1493.3 L3255.1 1517.4 L3255.8 1541.5 L3256.0 1565.6 L3255.6 1589.7 L3254.6 1613.8 L3252.8 1637.8 L3250.2 1661.9 L3246.6 1686.0 L3242.1 1710.1 L3236.5 1734.2 L3229.7 1758.2 L3221.7 1782.3 L3212.4 1806.4 L3201.7 1830.5 L3189.4 1854.6 L3175.6 1878.7 L3160.2 1902.8 L3143.0 1926.8 L3123.9 1950.9 L3103.0 1975.0" stroke-opacity="0.62"/><path d="M3278.0 1397.0 L3279.9 1421.1 L3281.8 1445.2 L3283.6 1469.2 L3285.1 1493.3 L3286.4 1517.4 L3287.4 1541.5 L3288.0 1565.6 L3288.1 1589.7 L3287.8 1613.8 L3286.8 1637.8 L3285.2 1661.9 L3282.9 1686.0 L3279.8 1710.1 L3275.8 1734.2 L3271.0 1758.2 L3265.2 1782.3 L3258.3 1806.4 L3250.4 1830.5 L3241.3 1854.6 L3230.9 1878.7 L3219.3 1902.8 L3206.3 1926.8 L3191.9 1950.9 L3176.0 1975.0" stroke-opacity="0.71"/><path d="M3309.0 1397.0 L3311.0 1421.1 L3312.9 1445.2 L3314.7 1469.2 L3316.3 1493.3 L3317.8 1517.4 L3319.1 1541.5 L3320.0 1565.6 L3320.7 1589.7 L3320.9 1613.8 L3320.8 1637.8 L3320.1 1661.9 L3319.0 1686.0 L3317.3 1710.1 L3315.0 1734.2 L3312.0 1758.2 L3308.3 1782.3 L3303.9 1806.4 L3298.7 1830.5 L3292.6 1854.6 L3285.7 1878.7 L3277.8 1902.8 L3268.9 1926.8 L3259.0 1950.9 L3248.0 1975.0" stroke-opacity="0.80"/><path d="M3340.0 1397.0 L3342.0 1421.1 L3343.9 1445.2 L3345.7 1469.2 L3347.5 1493.3 L3349.1 1517.4 L3350.6 1541.5 L3351.8 1565.6 L3352.9 1589.7 L3353.7 1613.8 L3354.2 1637.8 L3354.3 1661.9 L3354.1 1686.0 L3353.5 1710.1 L3352.5 1734.2 L3351.1 1758.2 L3349.1 1782.3 L3346.6 1806.4 L3343.6 1830.5 L3340.0 1854.6 L3335.8 1878.7 L3330.9 1902.8 L3325.3 1926.8 L3319.0 1950.9 L3312.0 1975.0" stroke-opacity="0.89"/><path d="M3371.0 1397.0 L3373.5 1421.1 L3376.0 1445.2 L3378.5 1469.2 L3380.8 1493.3 L3383.0 1517.4 L3385.0 1541.5 L3386.8 1565.6 L3388.4 1589.7 L3389.7 1613.8 L3390.7 1637.8 L3391.4 1661.9 L3391.6 1686.0 L3391.5 1710.1 L3390.9 1734.2 L3389.8 1758.2 L3388.3 1782.3 L3386.1 1806.4 L3383.4 1830.5 L3380.1 1854.6 L3376.1 1878.7 L3371.5 1902.8 L3366.1 1926.8 L3359.9 1950.9 L3353.0 1975.0" stroke-opacity="0.98"/><path d="M3402.0 1397.0 L3405.1 1421.1 L3408.2 1445.2 L3411.2 1469.2 L3414.1 1493.3 L3416.8 1517.4 L3419.4 1541.5 L3421.7 1565.6 L3423.7 1589.7 L3425.4 1613.8 L3426.8 1637.8 L3427.8 1661.9 L3428.4 1686.0 L3428.5 1710.1 L3428.1 1734.2 L3427.1 1758.2 L3425.6 1782.3 L3423.5 1806.4 L3420.7 1830.5 L3417.2 1854.6 L3413.0 1878.7 L3408.0 1902.8 L3402.2 1926.8 L3395.5 1950.9 L3388.0 1975.0" stroke-opacity="1.00"/><path d="M3433.0 1397.0 L3436.7 1421.1 L3440.4 1445.2 L3443.9 1469.2 L3447.4 1493.3 L3450.6 1517.4 L3453.6 1541.5 L3456.4 1565.6 L3458.8 1589.7 L3460.9 1613.8 L3462.6 1637.8 L3463.8 1661.9 L3464.5 1686.0 L3464.7 1710.1 L3464.3 1734.2 L3463.2 1758.2 L3461.5 1782.3 L3459.1 1806.4 L3455.9 1830.5 L3451.9 1854.6 L3447.0 1878.7 L3441.2 1902.8 L3434.5 1926.8 L3426.8 1950.9 L3418.0 1975.0" stroke-opacity="1.00"/><path d="M3464.0 1397.0 L3468.3 1421.1 L3472.5 1445.2 L3476.6 1469.2 L3480.6 1493.3 L3484.3 1517.4 L3487.8 1541.5 L3491.0 1565.6 L3493.8 1589.7 L3496.1 1613.8 L3498.0 1637.8 L3499.4 1661.9 L3500.1 1686.0 L3500.2 1710.1 L3499.7 1734.2 L3498.3 1758.2 L3496.2 1782.3 L3493.2 1806.4 L3489.4 1830.5 L3484.5 1854.6 L3478.7 1878.7 L3471.7 1902.8 L3463.7 1926.8 L3454.5 1950.9 L3444.0 1975.0" stroke-opacity="1.00"/><path d="M3495.0 1397.0 L3499.9 1421.1 L3504.7 1445.2 L3509.3 1469.2 L3513.8 1493.3 L3518.1 1517.4 L3522.0 1541.5 L3525.5 1565.6 L3528.6 1589.7 L3531.2 1613.8 L3533.2 1637.8 L3534.6 1661.9 L3535.2 1686.0 L3535.2 1710.1 L3534.3 1734.2 L3532.5 1758.2 L3529.7 1782.3 L3526.0 1806.4 L3521.2 1830.5 L3515.2 1854.6 L3508.0 1878.7 L3499.6 1902.8 L3489.8 1926.8 L3478.6 1950.9 L3466.0 1975.0" stroke-opacity="1.00"/><path d="M3526.0 1397.0 L3531.4 1421.1 L3536.8 1445.2 L3542.0 1469.2 L3547.0 1493.3 L3551.7 1517.4 L3556.1 1541.5 L3559.9 1565.6 L3563.3 1589.7 L3566.1 1613.8 L3568.1 1637.8 L3569.5 1661.9 L3570.0 1686.0 L3569.6 1710.1 L3568.3 1734.2 L3565.9 1758.2 L3562.4 1782.3 L3557.7 1806.4 L3551.7 1830.5 L3544.4 1854.6 L3535.6 1878.7 L3525.4 1902.8 L3513.6 1926.8 L3500.2 1950.9 L3485.0 1975.0" stroke-opacity="1.00"/><path d="M3552 1215 C3528 1270 3524 1330 3527 1397 C3531 1480 3545 1560 3556 1640"/><path d="M3556 1800 C3540 1860 3520 1920 3498 1975"/><path d="M3556 1045.2 L3519 1053.0"/><path d="M3556 1058.5 L3519 1067.3"/><path d="M3556 1071.7 L3519 1083.4"/><path d="M3556 1084.7 L3519 1101.2"/><path d="M3556 1097.5 L3519 1120.6"/><path d="M3556 1110.1 L3519 1141.8"/><path d="M3556 1122.4 L3519 1164.6"/><path d="M3556 1134.6 L3519 1189.2"/><path d="M3556 1146.6 L3519 1215.4"/><path d="M3556 1158.3 L3519 1243.3"/><path d="M3556 1169.8 L3519 1273.0"/><path d="M3556 1181.2 L3519 1304.3"/></g></svg>
<svg style="left:2674px;top:46px;" width="24" height="34" viewBox="0 0 24 34"><path d="M19 4.8 L6.2 17 L19 29.2" fill="none" stroke="#555" stroke-width="5.2"/></svg>
<svg style="left:3272px;top:46px;" width="14" height="38" viewBox="0 0 14 38"><circle cx="7" cy="6.5" r="4.5" fill="#555"/><circle cx="7" cy="19.6" r="4.5" fill="#555"/><circle cx="7" cy="32.7" r="4.5" fill="#555"/></svg>
<svg style="left:3333px;top:50px;" width="32" height="30" viewBox="0 0 32 30"><path d="M9.2 7 Q9.2 1.3 16 1.3 Q22.8 1.3 22.8 7 L19.6 7 Q19.6 4.3 16 4.3 Q12.4 4.3 12.4 7 Z" fill="#555"/><path d="M1 6.5 H31 V13.2 Q16 23.5 1 13.2 Z" fill="#555"/><path d="M1 16.6 Q16 27 31 16.6 V28.9 H1 Z" fill="#555"/></svg>
<svg style="left:3404px;top:50px;" width="30" height="30" viewBox="0 0 30 30"><path d="M0 0 L11.6 0 L0 11.6 Z" fill="#555"/><path d="M4 4 L11.3 11.3" stroke="#555" stroke-width="4.6" fill="none"/><path d="M30 0 L18.4 0 L30 11.6 Z" fill="#555"/><path d="M26 4 L18.7 11.3" stroke="#555" stroke-width="4.6" fill="none"/><path d="M0 30 L11.6 30 L0 18.4 Z" fill="#555"/><path d="M4 26 L11.3 18.7" stroke="#555" stroke-width="4.6" fill="none"/><path d="M30 30 L18.4 30 L30 18.4 Z" fill="#555"/><path d="M26 26 L18.7 18.7" stroke="#555" stroke-width="4.6" fill="none"/></svg>
<svg style="left:3473px;top:49px;" width="32" height="32" viewBox="0 0 32 32"><path d="M4 4 L28 28 M28 4 L4 28" stroke="#555" stroke-width="5" fill="none"/></svg>
<svg style="left:2658px;top:497px;" width="46" height="44" viewBox="0 0 46 44"><ellipse cx="22.9" cy="10.3" rx="8.7" ry="9.4" fill="#828282"/><path d="M1.2 40 L3.8 29.5 Q13 24 22.9 24 Q33 24 42.2 29.5 L44.8 40 Q44.8 42.8 42 42.8 L4 42.8 Q1.2 42.8 1.2 40 Z" fill="#828282"/></svg>
<span style="left:2726.05px;top:506.22px;font-size:34px;color:#000;transform:scaleX(0.9842);">IS Professional</span>
<div style="left:3228.2px;top:510.2px;width:3px;height:3px;background:#dcdcdc;border-radius:50%;"></div>
<div style="left:2655.5px;top:565.5px;width:603.5px;height:103px;background:linear-gradient(100deg,#0072d3 0%,#005fbd 45%,#004a9f 100%);background-clip:padding-box;border:1.5px solid #d9dde6;border-radius:18px;"></div>
<span style="left:2709.00px;top:602.64px;font-size:33.5px;color:#fff;letter-spacing:0.555px;">Troubleshoot Application Access</span>
<svg style="left:2655.9px;top:734.8px;" width="45.2" height="45.2" viewBox="0 0 45.2 45.2"><defs><linearGradient id="g2" gradientUnits="userSpaceOnUse" x1="10" y1="22" x2="37" y2="40"><stop offset="0" stop-color="#55b0e0"/><stop offset="0.5" stop-color="#7a86df"/><stop offset="1" stop-color="#9355e2"/></linearGradient><linearGradient id="g2b" gradientUnits="userSpaceOnUse" x1="31" y1="12" x2="46" y2="19"><stop offset="0" stop-color="#7291e0"/><stop offset="1" stop-color="#8a5ce2"/></linearGradient></defs><path d="M9.54 0.77 L12.38 6.93 L18.54 9.77 L12.38 12.61 L9.54 18.77 L6.70 12.61 L0.54 9.77 L6.70 6.93 Z" fill="#4fbcdd" stroke="#4fbcdd" stroke-width="2.0" stroke-linejoin="round"/><path d="M38.40 8.85 L40.48 13.37 L45.00 15.45 L40.48 17.53 L38.40 22.05 L36.32 17.53 L31.80 15.45 L36.32 13.37 Z" fill="url(#g2b)" stroke="url(#g2b)" stroke-width="1.2" stroke-linejoin="round"/><path d="M23.85 15.46 L28.35 25.26 L38.15 29.76 L28.35 34.26 L23.85 44.06 L19.35 34.26 L9.55 29.76 L19.35 25.26 Z" fill="url(#g2)" stroke="url(#g2)" stroke-width="2.8" stroke-linejoin="round"/></svg>
<span style="left:2710.70px;top:819.64px;font-size:33.5px;color:#000;letter-spacing:0.253px;">Here is the response for Netsec Insights</span>
<div style="left:2711px;top:906.5px;width:753px;height:314.5px;background:#fff;border-radius:19px;box-shadow:0 3px 32px rgba(0,0,0,0.078);"></div>
<span style="left:2750.20px;top:945.80px;font-size:43px;color:#333;letter-spacing:0.484px;">Copilot Response</span>
<svg style="left:0;top:0" width="3552" height="1973" viewBox="0 0 3552 1973"><path d="M3370.6 959.6 H3410" stroke="#2b2b2b" stroke-width="2.5" stroke-linecap="round"/><circle cx="3387.4" cy="959.6" r="3.6" fill="#fff" stroke="#2b2b2b" stroke-width="2.3"/><path d="M3370.6 970.1 H3410" stroke="#2b2b2b" stroke-width="2.5" stroke-linecap="round"/><circle cx="3401.5" cy="970.1" r="3.6" fill="#fff" stroke="#2b2b2b" stroke-width="2.3"/><path d="M3370.6 980.8 H3410" stroke="#2b2b2b" stroke-width="2.5" stroke-linecap="round"/><circle cx="3379.7" cy="980.8" r="3.6" fill="#fff" stroke="#2b2b2b" stroke-width="2.3"/></svg>
<span style="left:2752.20px;top:1050.22px;font-size:34px;color:#333;transform:scaleX(0.9949);">What aspect of application access</span>
<span style="left:2751.00px;top:1100.72px;font-size:34px;color:#333;letter-spacing:0.452px;">information would you like for user</span>
<span style="left:2751.02px;top:1150.72px;font-size:34px;color:#333;transform:scaleX(0.9912);">panwuser?</span>
<svg style="left:2682px;top:1310px;" width="34" height="30" viewBox="0 0 34 30"><rect x="1.1" y="15.3" width="3.8" height="14.1" fill="#b8b8b8"/><path d="M8.1 15.4 Q13.5 10.8 17.7 1 Q20.6 1.2 20.9 3.6 L19.7 12.9 L30.8 13.2 Q33.2 13.6 32.9 15.3 L30.5 24.5 Q29 29.4 24.6 29.4 L8.1 29.4 Z" fill="#b8b8b8"/></svg>
<svg style="left:2757px;top:1310px;" width="34" height="30" viewBox="0 0 34 30"><rect x="1" y="1.1" width="3.9" height="13.8" fill="#b8b8b8"/><path d="M8 1.1 L25.4 1.1 Q29 1.1 30.4 6.7 L33 15.4 Q33.2 17.1 31 17 L20.1 17.3 L21 26.6 Q20.8 29 17.9 29.1 Q13.5 19.6 8 15.4 Z" fill="#b8b8b8"/></svg>
<div style="left:2656.5px;top:1476.5px;width:735px;height:144.5px;border:2px solid #1a8bf0;border-radius:18px 18px 18px 0;"></div>
<span style="left:2700.60px;top:1508.84px;font-size:33.5px;color:#1a8bf0;letter-spacing:0.157px;">Which policy denied panwuser's access to</span>
<span style="left:2700.60px;top:1558.44px;font-size:33.5px;color:#1a8bf0;transform:scaleX(0.9914);">{application_name}?</span>
<div style="left:2656.5px;top:1677.5px;width:864px;height:163px;border:2px solid #d4d5da;border-radius:9px;background:#fff;"></div>
<span style="left:2712.31px;top:1742.77px;font-size:35px;color:#8b8b8b;transform:scaleX(0.8966);font-style:italic;">Type your question here</span>
<svg style="left:3408px;top:1714.9px;" width="85" height="85" viewBox="0 0 85 85"><circle cx="42.5" cy="42.4" r="42.4" fill="#e7e7e7"/><path d="M67.1 26.8 L19.3 34 L33.1 46 L36.9 64.7 Z M33.1 46 L67.1 26.8" fill="none" stroke="#444" stroke-width="2.7" stroke-linejoin="round"/></svg>
<span style="left:2688.55px;top:1864.48px;font-size:30.5px;color:#b4b4b4;transform:scaleX(0.9513);">Copilot may leverage a large language model or generative AI,</span>
<span style="left:2935.04px;top:1907.48px;font-size:30.5px;color:#b4b4b4;transform:scaleX(0.9623);">and may contain errors.</span>
<div style="left:2493px;top:372px;width:677px;height:5px;background:#9e9e9e;"></div>
<div style="left:3165px;top:372px;width:5px;height:208.5px;background:#9e9e9e;"></div>
</body></html>
